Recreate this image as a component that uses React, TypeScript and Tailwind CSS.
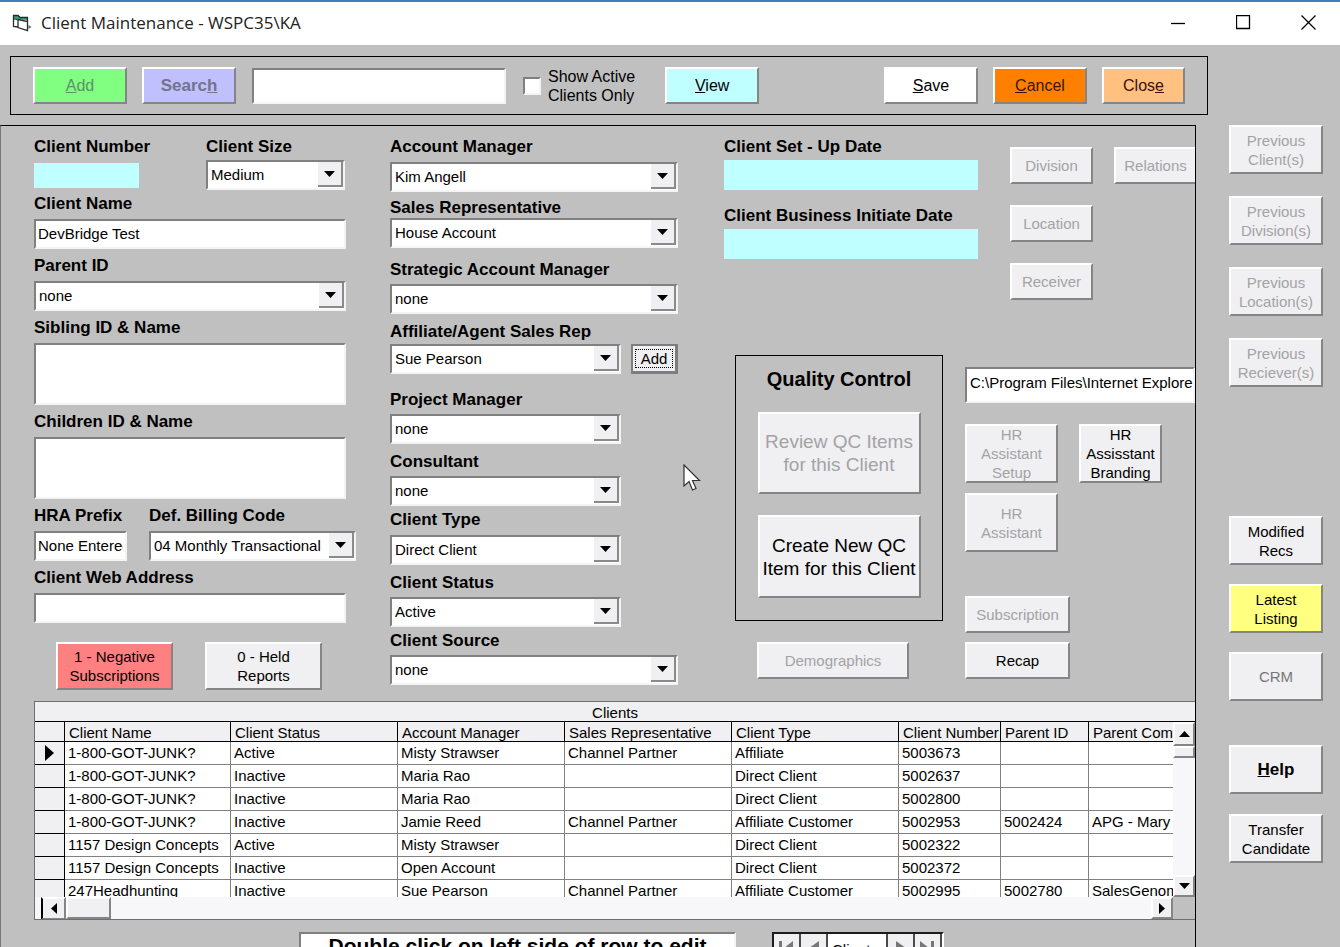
import type { ReactNode } from "react";
import clsx from "clsx";

const BEVEL =
  "border-2 border-t-white border-l-white border-r-[#858585] border-b-[#858585]";
const SUNKEN =
  "border-2 border-t-[#808080] border-l-[#808080] border-r-[#f4f4f4] border-b-[#f4f4f4]";

function Btn({
  children,
  className,
  tone = "bg-[#f0eff1]",
  disabled = false,
}: {
  children: ReactNode;
  className?: string;
  tone?: string;
  disabled?: boolean;
}) {
  return (
    <button
      type="button"
      disabled={disabled}
      className={clsx(
        "flex shrink-0 items-center justify-center whitespace-pre text-center leading-[19px]",
        BEVEL,
        tone,
        disabled && "text-[#a3a3a6]",
        className,
      )}
    >
      <span>{children}</span>
    </button>
  );
}

function Field({
  id,
  label,
  children,
  className = "gap-[5px]",
}: {
  id: string;
  label: string;
  children: ReactNode;
  className?: string;
}) {
  return (
    <div className={clsx("flex flex-col", className)}>
      <label htmlFor={id} className="whitespace-nowrap text-[17px] font-bold leading-5">
        {label}
      </label>
      {children}
    </div>
  );
}

function Triangle({ dir }: { dir: "up" | "down" | "left" | "right" }) {
  const paths = {
    up: "M0 6 L5.5 0 L11 6 Z",
    down: "M0 0 L11 0 L5.5 6 Z",
    left: "M6 0 L6 11 L0 5.5 Z",
    right: "M0 0 L6 5.5 L0 11 Z",
  };
  const flat = dir === "up" || dir === "down";
  return (
    <svg width={flat ? 11 : 6} height={flat ? 6 : 11} aria-hidden="true">
      <path d={paths[dir]} fill="#000" />
    </svg>
  );
}

function Combo({ id, value, className = "w-full" }: { id: string; value: string; className?: string }) {
  return (
    <div className={clsx("relative", className)}>
      <select
        id={id}
        defaultValue={value}
        className={clsx("block h-[30px] w-full appearance-none bg-white pl-[3px] pr-6 text-[15px] leading-5", SUNKEN)}
      >
        <option>{value}</option>
      </select>
      <span className="pointer-events-none absolute right-[2px] top-[2px] flex h-[25px] w-[25px] items-center justify-center border-b-2 border-r-2 border-[#8a8a8a] bg-[#f0eff1]">
        <Triangle dir="down" />
      </span>
    </div>
  );
}

const INPUT = clsx("h-[30px] bg-white px-[2px] pb-[2px] text-[15px]", SUNKEN);

function ManagerFields() {
  return (
    <div className="flex w-[288px] shrink-0 flex-col pt-[11px]">
      <Field id="acct" label="Account Manager">
        <Combo id="acct" value="Kim Angell" />
      </Field>
      <Field id="rep" label="Sales Representative" className="mt-[6px]">
        <Combo id="rep" value="House Account" />
      </Field>
      <Field id="strat" label="Strategic Account Manager" className="mt-3 gap-1">
        <Combo id="strat" value="none" />
      </Field>
      <Field id="affil" label="Affiliate/Agent Sales Rep" className="mt-2 gap-[2px]">
        <div className="flex justify-between">
          <Combo id="affil" value="Sue Pearson" className="w-[231px]" />
          <button
            type="button"
            className="h-[30px] w-[47px] border-2 border-b-[3px] border-r-[3px] border-[#7d7d7d] bg-[#f0eff1] p-[2px] text-[15px] leading-[17px]"
          >
            <span className="block border border-dotted border-black">Add</span>
          </button>
        </div>
      </Field>
      <Field id="pm" label="Project Manager" className="mt-4 gap-1">
        <Combo id="pm" value="none" className="w-[231px]" />
      </Field>
      <Field id="cons" label="Consultant" className="mt-2 gap-1">
        <Combo id="cons" value="none" className="w-[231px]" />
      </Field>
      <Field id="ctype" label="Client Type" className="mt-1 gap-[5px]">
        <Combo id="ctype" value="Direct Client" className="w-[231px]" />
      </Field>
      <Field id="cstat" label="Client Status" className="mt-2 gap-1">
        <Combo id="cstat" value="Active" className="w-[231px]" />
      </Field>
      <Field id="csrc" label="Client Source" className="mt-1 gap-1">
        <Combo id="csrc" value="none" />
      </Field>
    </div>
  );
}

function IdentityFields() {
  return (
    <div className="w-[312px] shrink-0 pt-[11px]">
      <div className="flex">
        <Field id="num" label="Client Number" className="w-[172px] gap-[6px]">
          <input id="num" className="h-[25px] w-[105px] bg-[#c0ffff] px-1" />
        </Field>
        <Field id="size" label="Client Size" className="w-[139px] gap-[3px]">
          <Combo id="size" value="Medium" />
        </Field>
      </div>
      <div className="mt-1 flex flex-col gap-[7px]">
        <Field id="name" label="Client Name">
          <input id="name" defaultValue="DevBridge Test" className={INPUT} />
        </Field>
        <Field id="parent" label="Parent ID">
          <Combo id="parent" value="none" />
        </Field>
        <Field id="sib" label="Sibling ID & Name">
          <textarea id="sib" className={clsx("block h-[62px] resize-none bg-white", SUNKEN)} />
        </Field>
        <Field id="child" label="Children ID & Name">
          <textarea id="child" className={clsx("block h-[62px] resize-none bg-white", SUNKEN)} />
        </Field>
        <div className="flex gap-[22px]">
          <Field id="hra" label="HRA Prefix" className="w-[93px] shrink-0 gap-[5px]">
            <input id="hra" defaultValue="None Entered" className={clsx(INPUT, "w-full")} />
          </Field>
          <Field id="bill" label="Def. Billing Code" className="w-[207px] shrink-0 gap-[5px]">
            <Combo id="bill" value="04 Monthly Transactional" />
          </Field>
        </div>
        <Field id="web" label="Client Web Address">
          <input id="web" className={INPUT} />
        </Field>
      </div>
      <div className="mt-[19px] flex gap-8 pl-[22px]">
        <Btn tone="bg-[#ff8080]" className="h-12 w-[117px]">{"1 - Negative\nSubscriptions"}</Btn>
        <Btn className="h-12 w-[117px]">{"0 - Held\nReports"}</Btn>
      </div>
    </div>
  );
}

function RightArea() {
  return (
    <div className="ml-[46px] flex min-w-0 flex-1 flex-col overflow-hidden">
      <div className="flex pt-[11px]">
        <div className="flex w-[286px] shrink-0 flex-col gap-4">
          <Field id="setup" label="Client Set - Up Date" className="gap-[3px]">
            <input id="setup" className="h-[30px] w-[254px] bg-[#c0ffff] px-1" />
          </Field>
          <Field id="init" label="Client Business Initiate Date" className="gap-[3px]">
            <input id="init" className="h-[30px] w-[254px] bg-[#c0ffff] px-1" />
          </Field>
        </div>
        <div className="flex shrink-0 items-start gap-[21px] pt-[10px]">
          <div className="flex flex-col gap-[21px]">
            <Btn disabled className="h-[37px] w-[83px]">Division</Btn>
            <Btn disabled className="h-[37px] w-[83px]">Location</Btn>
            <Btn disabled className="h-[37px] w-[83px]">Receiver</Btn>
          </div>
          <Btn disabled className="h-[37px] w-[83px]">Relations</Btn>
        </div>
      </div>
      <div className="mt-[55px] flex gap-[22px] pl-[11px]">
        <div className="w-[208px] shrink-0">
          <section className="flex h-[266px] flex-col items-center border border-black pt-[11px]">
            <h2 className="text-[20px] font-bold leading-6">Quality Control</h2>
            <Btn disabled className="mt-[21px] h-[82px] w-[163px] text-[19px] leading-[23px]">
              {"Review QC Items\nfor this Client"}
            </Btn>
            <Btn className="mt-[21px] h-[83px] w-[163px] text-[19px] leading-[23px]">
              {"Create New QC\nItem for this Client"}
            </Btn>
          </section>
          <Btn disabled className="ml-[22px] mt-[21px] h-[37px] w-[152px]">Demographics</Btn>
        </div>
        <div className="flex min-w-0 flex-1 flex-col items-start pt-3">
          <input
            aria-label="Browser path"
            defaultValue="C:\Program Files\Internet Explorer\iexplore.exe"
            className={clsx("h-[36px] w-full bg-white pb-[6px] pl-[3px] text-[15px]", SUNKEN)}
          />
          <div className="mt-[21px] flex gap-[21px]">
            <Btn disabled className="h-[59px] w-[93px]">{"HR\nAssistant\nSetup"}</Btn>
            <Btn className="h-[59px] w-[83px]">{"HR\nAssisstant\nBranding"}</Btn>
          </div>
          <Btn disabled className="mt-[10px] h-[59px] w-[93px]">{"HR\nAssistant"}</Btn>
          <Btn disabled className="mt-[44px] h-[37px] w-[105px]">Subscription</Btn>
          <Btn className="mt-[9px] h-[37px] w-[105px]">Recap</Btn>
        </div>
      </div>
    </div>
  );
}

const COLUMNS = [
  "Client Name",
  "Client Status",
  "Account Manager",
  "Sales Representative",
  "Client Type",
  "Client Number",
  "Parent ID",
  "Parent Company",
];

const ROWS = [
  ["1-800-GOT-JUNK?", "Active", "Misty Strawser", "Channel Partner", "Affiliate", "5003673", "", ""],
  ["1-800-GOT-JUNK?", "Inactive", "Maria Rao", "", "Direct Client", "5002637", "", ""],
  ["1-800-GOT-JUNK?", "Inactive", "Maria Rao", "", "Direct Client", "5002800", "", ""],
  ["1-800-GOT-JUNK?", "Inactive", "Jamie Reed", "Channel Partner", "Affiliate Customer", "5002953", "5002424", "APG - Mary"],
  ["1157 Design Concepts", "Active", "Misty Strawser", "", "Direct Client", "5002322", "", ""],
  ["1157 Design Concepts", "Inactive", "Open Account", "", "Direct Client", "5002372", "", ""],
  ["247Headhunting", "Inactive", "Sue Pearson", "Channel Partner", "Affiliate Customer", "5002995", "5002780", "SalesGenomics"],
];

function ClientsGrid() {
  return (
    <section className="ml-[33px] mt-[11px] border border-r-0 border-[#6e6e6e] bg-[#f0eff1]">
      <h2 id="grid-title" className="h-5 border-b border-black pt-[2px] text-center leading-[18px]">
        Clients
      </h2>
      <div className="flex h-[175px]">
        <div className="min-w-0 flex-1 overflow-hidden">
          <table
            aria-labelledby="grid-title"
            className="w-[1254px] table-fixed border-separate border-spacing-0 bg-white text-left"
          >
            <colgroup>
              <col className="w-[30px]" />
              <col className="w-[166px]" />
              <col className="w-[167px]" />
              <col className="w-[167px]" />
              <col className="w-[167px]" />
              <col className="w-[167px]" />
              <col className="w-[102px]" />
              <col className="w-[88px]" />
              <col className="w-[200px]" />
            </colgroup>
            <thead>
              <tr className="h-5">
                <td className="border-b border-r border-black bg-[#f0eff1] p-0" />
                {COLUMNS.map((c) => (
                  <th
                    key={c}
                    scope="col"
                    className="overflow-hidden whitespace-nowrap border-b border-r border-black bg-[#f0eff1] p-0 pl-1 font-normal"
                  >
                    <span className="block h-[19px] pt-[2px] leading-[18px]">{c}</span>
                  </th>
                ))}
              </tr>
            </thead>
            <tbody>
              {ROWS.map((row, i) => (
                <tr key={i} className="h-[23px]">
                  <td className="border-b border-r border-black bg-[#f0eff1] p-0 pl-[10px]">
                    {i === 0 && (
                      <svg width="9" height="16" aria-hidden="true" className="block">
                        <path d="M0 0 L9 8 L0 16 Z" fill="#000" />
                      </svg>
                    )}
                  </td>
                  {row.map((cell, j) => (
                    <td
                      key={j}
                      className="overflow-hidden whitespace-nowrap border-b border-r border-[#808080] p-0 pl-[3px] align-top leading-[21px]"
                    >
                      {cell}
                    </td>
                  ))}
                </tr>
              ))}
            </tbody>
          </table>
        </div>
        <div className="flex w-[22px] shrink-0 flex-col bg-[#f7f6f8]">
          <button type="button" aria-label="Scroll up" className={clsx("flex h-[24px] items-center justify-center bg-[#f0eff1]", BEVEL)}>
            <Triangle dir="up" />
          </button>
          <div className={clsx("h-3 bg-[#f0eff1]", BEVEL)} />
          <div className="flex-1" />
          <button type="button" aria-label="Scroll down" className={clsx("flex h-[22px] items-center justify-center bg-[#f0eff1]", BEVEL)}>
            <Triangle dir="down" />
          </button>
        </div>
      </div>
      <div className="flex h-[22px] bg-[#f7f6f8] pl-[6px]">
        <button type="button" aria-label="Scroll left" className="flex w-[25px] items-center justify-center border-2 border-b border-l-black border-r-[#858585] border-t-white border-b-[#858585] bg-[#f0eff1]">
          <Triangle dir="left" />
        </button>
        <div className={clsx("w-[45px] bg-[#f0eff1]", BEVEL)} />
        <div className="flex-1" />
        <button type="button" aria-label="Scroll right" className={clsx("flex w-[22px] items-center justify-center bg-[#f0eff1]", BEVEL)}>
          <Triangle dir="right" />
        </button>
        <div className="w-[22px] bg-[#c0c0c0]" />
      </div>
    </section>
  );
}

function NavButton({ label, path }: { label: string; path: string }) {
  return (
    <button
      type="button"
      aria-label={label}
      className="flex w-[27px] items-start justify-center border-r-2 border-[#4a4a4a] bg-[#f0eff1] pt-[7px]"
    >
      <svg width="16" height="16" aria-hidden="true">
        <path d={path} fill="#777" />
      </svg>
    </button>
  );
}

function Sidebar() {
  return (
    <aside className="flex w-[144px] shrink-0 flex-col pl-[33px]">
      <div className="flex flex-col gap-[22px]">
        <Btn disabled className="h-[49px] w-[94px]">{"Previous\nClient(s)"}</Btn>
        <Btn disabled className="h-[49px] w-[94px]">{"Previous\nDivision(s)"}</Btn>
        <Btn disabled className="h-[49px] w-[94px]">{"Previous\nLocation(s)"}</Btn>
        <Btn disabled className="h-[49px] w-[94px]">{"Previous\nReciever(s)"}</Btn>
      </div>
      <div className="mt-[129px] flex flex-col gap-[19px]">
        <Btn className="h-[49px] w-[94px]">{"Modified\nRecs"}</Btn>
        <Btn tone="bg-[#ffff80]" className="h-[49px] w-[94px]">{"Latest\nListing"}</Btn>
        <Btn className="h-[49px] w-[94px] text-[#77777a]">CRM</Btn>
      </div>
      <div className="mt-[44px] flex flex-col gap-5">
        <Btn className="h-[49px] w-[94px] text-[17px] font-bold">
          <u>H</u>elp
        </Btn>
        <Btn className="h-[49px] w-[94px]">{"Transfer\nCandidate"}</Btn>
      </div>
    </aside>
  );
}

function TitleBar() {
  return (
    <header className="flex h-[45px] shrink-0 items-center border-t-2 border-[#3f7fbd] bg-white pb-[2px] pl-3 pr-6">
      <svg width="20" height="18" viewBox="0 0 20 18" aria-hidden="true">
        <path d="M1 1 L6 1 L8 3 L15 3 L15 6 L6 5.500 L1 4 Z" fill="#2aa579" />
        <path
          d="M1.500 1 L1.500 12.500 L6 13 M1 1.500 L6 1.500 L8 3.500 L15.500 3.500 L15.500 7 M1.500 4.500 L6 6 M6 5.500 L6 13.500 L15.500 16.500 L15.500 7.500 L6 5.500"
          fill="none"
          stroke="#2b2b2b"
          strokeWidth="1.300"
        />
        <path d="M16.500 11 L19.500 13 L16.500 15 Z" fill="#666" />
      </svg>
      <h1 className="ml-[9px] flex-1 font-['Open_Sans',sans-serif] text-[17px] leading-6 text-[#222]">
        Client Maintenance - WSPC35\KA
      </h1>
      <div className="flex items-center gap-[50px]">
        <button type="button" aria-label="Minimize">
          <svg width="15" height="15" className="block"><path d="M0 8.500H14" stroke="#000" strokeWidth="1.300" /></svg>
        </button>
        <button type="button" aria-label="Maximize">
          <svg width="15" height="15" className="block"><path d="M0.500 0.500H13.500V13.500H0.500Z" fill="none" stroke="#000" strokeWidth="1.300" /></svg>
        </button>
        <button type="button" aria-label="Close window">
          <svg width="15" height="15" className="block"><path d="M0.500 0.500L14.500 14.500M14.500 0.500L0.500 14.500" stroke="#000" strokeWidth="1.300" /></svg>
        </button>
      </div>
    </header>
  );
}

function Toolbar() {
  return (
    <div className="ml-[10px] mr-[132px] mt-[11px] flex h-[59px] shrink-0 items-center border border-black px-[22px] text-[16px]">
      <Btn tone="bg-[#80ff80]" className="h-[37px] w-[94px] text-[#5f8f6f]">
        <u>A</u>dd
      </Btn>
      <Btn tone="bg-[#c0c0ff]" className="ml-[15px] h-[37px] w-[94px] text-[17px] font-bold text-[#73738c]">
        Searc<u>h</u>
      </Btn>
      <input aria-label="Search text" className={clsx("ml-4 h-[36px] w-[254px] bg-white px-1", SUNKEN)} />
      <label className="ml-[17px] flex items-center gap-[7px] whitespace-pre leading-[19px]">
        <input type="checkbox" className={clsx("size-[18px] appearance-none bg-white", SUNKEN)} />
        <span>{"Show Active\nClients Only"}</span>
      </label>
      <Btn tone="bg-[#c0ffff]" className="ml-[30px] h-[37px] w-[94px]">
        <u>V</u>iew
      </Btn>
      <div className="ml-auto flex gap-[15px]">
        <Btn tone="bg-white" className="h-[37px] w-[94px]">
          <u>S</u>ave
        </Btn>
        <Btn tone="bg-[#ff8000]" className="h-[37px] w-[94px] text-[#3a1500]">
          <u>C</u>ancel
        </Btn>
        <Btn tone="bg-[#ffc080]" className="h-[37px] w-[83px] text-[#3a1010]">
          Clos<u>e</u>
        </Btn>
      </div>
    </div>
  );
}

export default function App() {
  return (
    <div className="relative flex h-screen flex-col overflow-hidden bg-[#c0c0c0] font-['Liberation_Sans',Arial,sans-serif] text-[15px] text-black">
      <TitleBar />
      <Toolbar />
      <div className="mt-[10px] flex min-h-0 flex-1">
        <main className="min-w-0 flex-1 overflow-hidden border border-b-0 border-l-[#777] border-r-black border-t-black">
          <div className="flex pl-[33px]">
            <IdentityFields />
            <div className="ml-11 shrink-0">
              <ManagerFields />
            </div>
            <RightArea />
          </div>
          <ClientsGrid />
          <div className="mt-3 flex gap-9 pl-[298px]">
            <p className={clsx("h-9 w-[437px] bg-white text-center text-[21px] font-bold leading-[24px]", SUNKEN)}>
              Double click on left side of row to edit
            </p>
            <div className="flex h-9 border-2 border-[#1c1c1c] border-r-white bg-white">
              <NavButton label="First record" path="M0 0H3V14H0Z M14 0V14L5 7Z" />
              <NavButton label="Previous record" path="M13 0V14L3 7Z" />
              <span className="w-[60px] border-r-2 border-[#4a4a4a] pl-1 pt-[6px] leading-[20px]">Clients</span>
              <NavButton label="Next record" path="M3 0V14L13 7Z" />
              <NavButton label="Last record" path="M0 0V14L9 7Z M11 0H14V14H11Z" />
            </div>
          </div>
        </main>
        <Sidebar />
      </div>
      <svg width="18" height="28" viewBox="0 0 18 28" aria-hidden="true" className="pointer-events-none absolute left-[683px] top-[464px]">
        <path d="M1 1 L1 22 L6 17.500 L9.500 26 L13 24.500 L9.500 16.500 L16.500 16.500 Z" fill="#fff" stroke="#333" strokeWidth="1.200" />
      </svg>
    </div>
  );
}
